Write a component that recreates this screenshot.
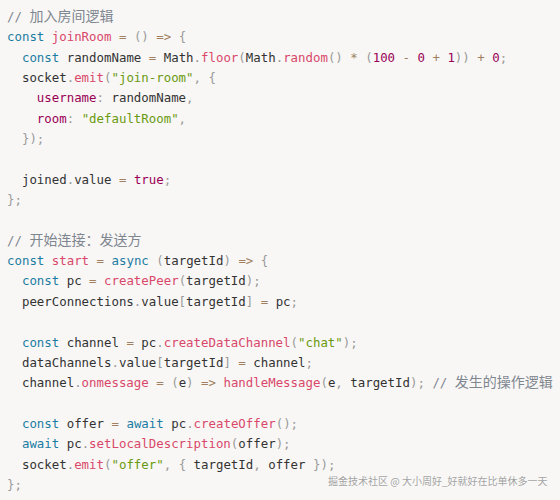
import React from 'react'

const code = [
  '// 加入房间逻辑',
  'const joinRoom = () => {',
  '  const randomName = Math.floor(Math.random() * (100 - 0 + 1)) + 0;',
  '  socket.emit("join-room", {',
  '    username: randomName,',
  '    room: "defaultRoom",',
  '  });',
  '',
  '  joined.value = true;',
  '};',
  '',
  '// 开始连接：发送方',
  'const start = async (targetId) => {',
  '  const pc = createPeer(targetId);',
  '  peerConnections.value[targetId] = pc;',
  '',
  '  const channel = pc.createDataChannel("chat");',
  '  dataChannels.value[targetId] = channel;',
  '  channel.onmessage = (e) => handleMessage(e, targetId); // 发生的操作逻辑',
  '',
  '  const offer = await pc.createOffer();',
  '  await pc.setLocalDescription(offer);',
  '  socket.emit("offer", { targetId, offer });',
  '};',
]

const keywords = ['const', 'async', 'await']
const fnVars = ['joinRoom', 'start', 'onmessage']

const tokenize = (line) => {
  const re = /(\/\/.*$)|("[^"]*")|(\b\d+\b)|([A-Za-z_$][\w$]*)|(=>|[=*+\-])|([(){}\[\].,;:])|(\s+)/g
  const out = []
  let m
  while ((m = re.exec(line))) {
    const t = m[0]
    if (m[1]) out.push(['c', t])
    else if (m[2]) out.push(['s', t])
    else if (m[3]) out.push(['n', t])
    else if (m[4]) {
      const rest = line.slice(re.lastIndex)
      if (keywords.includes(t)) out.push(['k', t])
      else if (t === 'true') out.push(['n', t])
      else if (fnVars.includes(t) || /^\(/.test(rest)) out.push(['f', t])
      else if (/^:/.test(rest)) out.push(['n', t])
      else out.push(['t', t])
    } else if (m[5]) out.push(['o', t])
    else if (m[6]) out.push(['p', t])
    else out.push(['t', t])
  }
  return out
}

const colors = {
  k: 'text-[#1a7ca3]',
  f: 'text-[#d9486a]',
  o: 'text-[#a08060]',
  p: 'text-[#9a9a9a]',
  n: 'text-[#990055]',
  s: 'text-[#6a9a10]',
  t: 'text-[#333333]',
}

const Comment = ({ text }) => {
  const cjk = text.replace(/^\/\/ /, '')
  return (
    <span className="text-[#7e8690]">
      {'// '}
      <span className="text-[14px] leading-none font-['Noto_Sans_CJK_SC',sans-serif]">{cjk}</span>
    </span>
  )
}

const Line = ({ text }) => (
  <div className="h-[20.35px] leading-[20.35px] whitespace-pre">
    {tokenize(text).map(([type, t], i) =>
      type === 'c' ? <Comment key={i} text={t} /> : (
        <span key={i} className={colors[type]}>{t}</span>
      )
    )}
  </div>
)

export default function App() {
  return (
    <div className="relative w-[560px] h-[500px] overflow-hidden bg-[#f8f7f5] pt-[7px] pl-[7px] font-['DejaVu_Sans_Mono',monospace] text-[12.4px]">
      {code.map((l, i) => (
        <Line key={i} text={l} />
      ))}
      <div className="absolute left-[328px] top-[473px] text-[10px] text-[#a3a3a3] font-['Noto_Sans_CJK_SC',sans-serif] [text-shadow:0_0_2px_#ffffff] whitespace-nowrap">
        掘金技术社区 @ 大小周好_好就好在比单休多一天
      </div>
    </div>
  )
}
